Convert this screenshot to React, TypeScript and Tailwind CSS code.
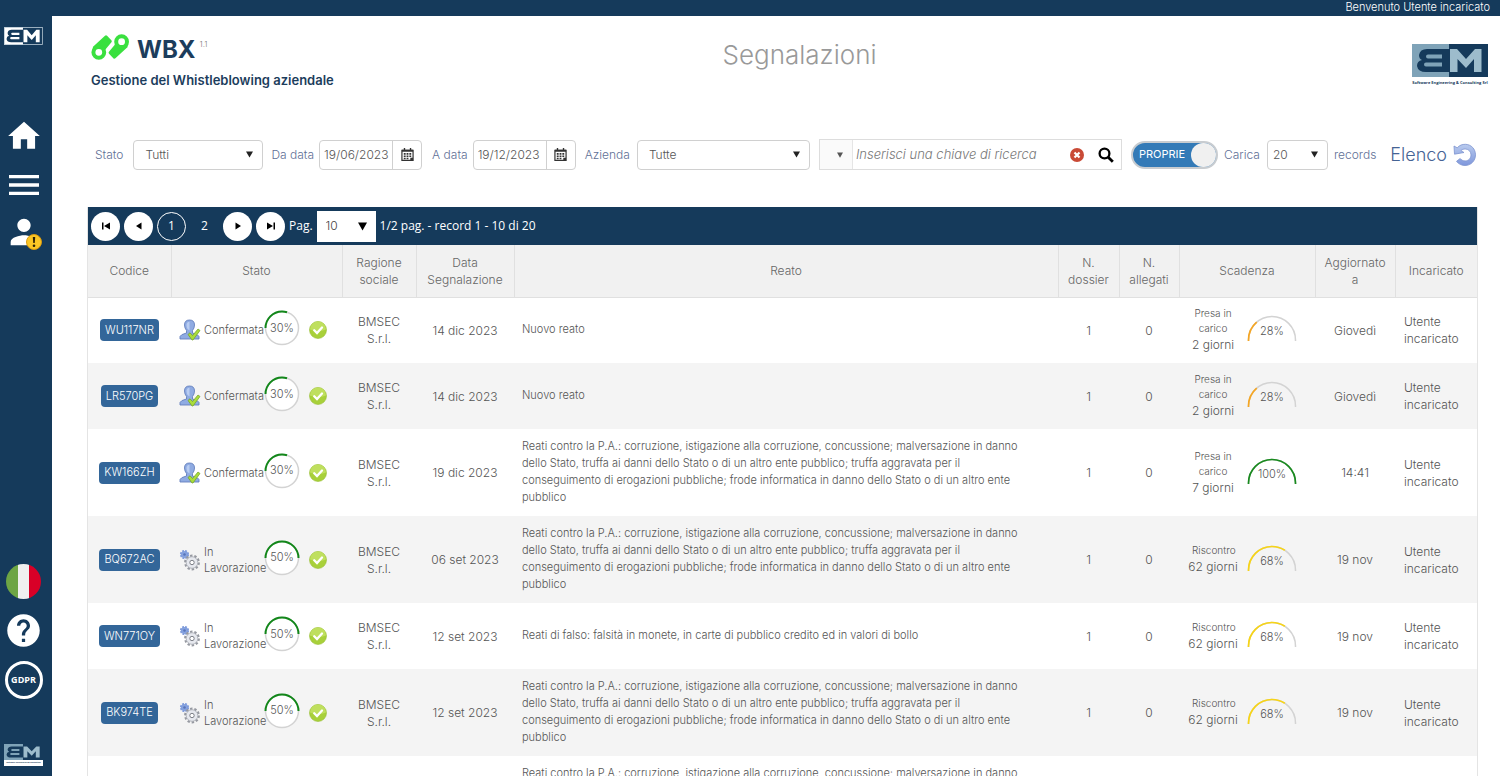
import React, { useState } from 'react';
import { MdHelp, MdHome, MdMenu, MdPerson } from 'react-icons/md';

interface Report {
  code: string;
  status: 'Confermata' | 'In Lavorazione';
  progress: number;
  date: string;
  crime: string;
  phase: string;
  days: string;
  remaining: number;
  color: string;
  updated: string;
}

const PA_CRIME =
  'Reati contro la P.A.: corruzione, istigazione alla corruzione, concussione; malversazione in danno dello Stato, truffa ai danni dello Stato o di un altro ente pubblico; truffa aggravata per il conseguimento di erogazioni pubbliche; frode informatica in danno dello Stato o di un altro ente pubblico';

const reports: Report[] = [
  { code: 'WU117NR', status: 'Confermata', progress: 30, date: '14 dic 2023', crime: 'Nuovo reato', phase: 'Presa in carico', days: '2 giorni', remaining: 28, color: '#f5a623', updated: 'Giovedì' },
  { code: 'LR570PG', status: 'Confermata', progress: 30, date: '14 dic 2023', crime: 'Nuovo reato', phase: 'Presa in carico', days: '2 giorni', remaining: 28, color: '#f5a623', updated: 'Giovedì' },
  { code: 'KW166ZH', status: 'Confermata', progress: 30, date: '19 dic 2023', crime: PA_CRIME, phase: 'Presa in carico', days: '7 giorni', remaining: 100, color: '#198a1f', updated: '14:41' },
  { code: 'BQ672AC', status: 'In Lavorazione', progress: 50, date: '06 set 2023', crime: PA_CRIME, phase: 'Riscontro', days: '62 giorni', remaining: 68, color: '#f7d417', updated: '19 nov' },
  { code: 'WN771OY', status: 'In Lavorazione', progress: 50, date: '12 set 2023', crime: 'Reati di falso: falsità in monete, in carte di pubblico credito ed in valori di bollo', phase: 'Riscontro', days: '62 giorni', remaining: 68, color: '#f7d417', updated: '19 nov' },
  { code: 'BK974TE', status: 'In Lavorazione', progress: 50, date: '12 set 2023', crime: PA_CRIME, phase: 'Riscontro', days: '62 giorni', remaining: 68, color: '#f7d417', updated: '19 nov' },
  { code: 'BT418LM', status: 'In Lavorazione', progress: 50, date: '12 set 2023', crime: PA_CRIME, phase: 'Riscontro', days: '62 giorni', remaining: 68, color: '#f7d417', updated: '19 nov' },
];

const columns = [
  { label: 'Codice', width: 'w-[83px]' },
  { label: 'Stato', width: 'w-[171px]' },
  { label: 'Ragione sociale', width: 'w-[74px]' },
  { label: 'Data Segnalazione', width: 'w-[98px]' },
  { label: 'Reato', width: '' },
  { label: 'N. dossier', width: 'w-[61px]' },
  { label: 'N. allegati', width: 'w-[60px]' },
  { label: 'Scadenza', width: 'w-[136px]' },
  { label: 'Aggiornato a', width: 'w-[80px]' },
  { label: 'Incaricato', width: 'w-[82px]' },
];

interface LogoColors {
  left: string;
  right: string;
  b: string;
  m: string;
  border?: string;
}

const BmMark: React.FC<LogoColors & { className: string }> = ({ left, right, b, m, border, className }) => (
  <svg viewBox="0 0 76 33" preserveAspectRatio="none" className={className} aria-label="BM">
    <rect width="37" height="33" fill={left} />
    <rect x="37" width="39" height="33" fill={right} />
    {border && <rect x="1" y="1" width="74" height="31" fill="none" stroke={border} strokeWidth="1.5" />}
    <path d="M37 5H15q-7 0-8 6q0 4 3 5q-5 1-5 6q1 6 9 6H37z" fill={b} />
    <path d="M30 10.500H16q-2 0-2 2t2 2H30zM30 18.500H14q-2 0-2 2t2 2H30z" fill={left} />
    <path d="M38 28V5h7l9 10 9-10h6.500v23H62V15l-8 9-8.500-9v13z" fill={m} />
  </svg>
);

const WbxMark = () => (
  <svg viewBox="0 0 39 28" className="h-7 w-[39px]" aria-hidden="true">
    <g fill="#3ae03f" stroke="#3ae03f" strokeWidth="3" strokeLinejoin="round">
      <path d="M3.300 13.500L15 2.800L19.300 7.200L12 16z" />
      <path d="M35.100 12.500L23.400 23.200L19.100 18.800L26.400 10z" />
    </g>
    <g fill="#fff" stroke="#3ae03f" strokeWidth="4">
      <circle cx="7.800" cy="18.300" r="5.400" />
      <circle cx="30.600" cy="7.700" r="5.400" />
    </g>
  </svg>
);

const WarningBadge = () => (
  <svg viewBox="0 0 16 16" className="size-4" aria-hidden="true">
    <circle cx="8" cy="8" r="7.500" fill="#fbc625" stroke="#d99a10" />
    <path d="M6.800 3h2.400l-.5 6H7.300z" fill="#2b2005" />
    <circle cx="8" cy="11.700" r="1.300" fill="#2b2005" />
  </svg>
);

const CalendarIcon = () => (
  <svg viewBox="0 0 14 14" className="size-[13px]" aria-hidden="true">
    <path d="M1 2.500h12v10.800H1z" fill="#fff" stroke="#333" strokeWidth="1.300" />
    <path d="M1 2h12v2H1zM3 0h1.500v2H3zM9.500 0H11v2H9.500z" fill="#333" />
    <path d="M3 5.500h2v1.800H3zM6 5.500h2v1.800H6zM9 5.500h2v1.800H9zM3 8h2v1.800H3zM6 8h2v1.800H6zM9 8h2v1.800H9zM3 10.500h2V12H3zM6 10.500h2V12H6zM10 10.500h3v3h-3z" fill="#333" />
  </svg>
);

const ReloadIcon = () => (
  <svg viewBox="0 0 24 24" className="size-6" aria-hidden="true">
    <defs>
      <linearGradient id="reload" x1="0" y1="0" x2="0" y2="1">
        <stop offset="0" stopColor="#b9cbee" />
        <stop offset="1" stopColor="#7f97dc" />
      </linearGradient>
    </defs>
    <path
      d="M1 3l3.200 1.800C6.500 2.300 9.200 1.200 12.500 1.300c5.800.2 10 4.800 10 10.500 0 6-4.500 10.700-10.500 10.700-3.500 0-6.500-1.500-8.500-4.200l3.700-2.800c1.300 1.600 2.900 2.400 4.900 2.400 3.400 0 5.900-2.600 5.900-6 0-3.300-2.400-5.900-5.800-5.900-1.800 0-3.100.6-4.300 1.700L11 9.500l-9.500 1.700z"
      fill="url(#reload)"
      stroke="#7c93cf"
      strokeWidth=".8"
      strokeLinejoin="round"
    />
  </svg>
);

const UserCheckIcon = () => (
  <svg viewBox="0 0 22 22" className="h-[22px] w-[22px] shrink-0" aria-hidden="true">
    <path d="M1 20v-2.500q.5-2 6.500-3.500v-2.500Q5.500 9 5.500 6q0-5 5-5t5 5q0 3-2 5.500V14q6 1.500 6.500 3.500V20z" fill="#8fabe2" stroke="#6480bd" strokeWidth=".9" />
    <path d="M7.500 6q0-3 3-3.200v8.700q-3-1.500-3-5.500z" fill="#b9cdf2" />
    <path d="M9 15.500l2-1.700 2.500 2.700L19 10l2 1.500-7 9.500h-1z" fill="#a9dc3c" stroke="#6f9f22" strokeWidth=".7" />
  </svg>
);

const GearsIcon = () => (
  <svg viewBox="0 0 22 22" className="h-[22px] w-[22px] shrink-0" aria-hidden="true">
    <circle cx="5.500" cy="5.500" r="3.600" fill="#86a3e0" stroke="#7f9bdb" strokeWidth="2" strokeDasharray="1.800 1.050" />
    <circle cx="5.500" cy="5.500" r="1.300" fill="#5874b8" />
    <circle cx="13" cy="13.500" r="6.800" fill="none" stroke="#9699a1" strokeWidth="2.200" strokeDasharray="2.400 1.870" />
    <circle cx="13" cy="13.500" r="5.800" fill="#e6e8ee" stroke="#a5a8b0" strokeWidth=".8" />
    <circle cx="13" cy="13.500" r="2.200" fill="#fff" stroke="#7d8088" />
  </svg>
);

const CheckIcon = () => (
  <svg viewBox="0 0 18 18" className="size-[18px] shrink-0" aria-hidden="true">
    <circle cx="9" cy="9" r="8.500" fill="#a8d03a" stroke="#97bd33" strokeWidth=".6" />
    <path d="M1 8.500a8 8 0 0 1 16 0q-8 3-16 0z" fill="#bfdf5e" />
    <path d="M5.200 9.200l2.800 2.800 5-5.500" fill="none" stroke="#fff" strokeWidth="2.300" strokeLinecap="round" />
  </svg>
);

const Ring: React.FC<{ value: number }> = ({ value }) => (
  <div className="relative mb-1 size-9 shrink-0">
    <svg viewBox="0 0 36 36" className="size-9" aria-hidden="true">
      <circle cx="18" cy="18" r="16.500" fill="#fff" stroke="#d3d3d3" strokeWidth="1.500" />
      <path d="M1.500 18a16.500 16.500 0 0 1 33 0a16.500 16.500 0 0 1-33 0" pathLength="100" fill="none" stroke="#12871a" strokeWidth="2" strokeDasharray={`${value} 100`} />
    </svg>
    <span className="absolute inset-0 flex items-center justify-center text-[11px]">{value}%</span>
  </div>
);

const Gauge: React.FC<{ value: number; color: string }> = ({ value, color }) => (
  <div className="relative mb-1 h-[26px] w-[50px] shrink-0">
    <svg viewBox="0 0 50 26" className="h-[26px] w-[50px]" aria-hidden="true">
      <path d="M1.500 26v-1a23.500 23.500 0 0 1 47 0v1" fill="none" stroke="#d3d3d3" strokeWidth="1.500" />
      <path d="M1.500 26v-1a23.500 23.500 0 0 1 47 0v1" pathLength="100" fill="none" stroke={color} strokeWidth="1.700" strokeDasharray={`${value} 100`} />
    </svg>
    <span className="absolute inset-x-0 top-2 text-center text-[11px] leading-4">{value}%</span>
  </div>
);

const Arrow: React.FC<{ className: string }> = ({ className }) => (
  <svg viewBox="0 0 8 8" className={className} aria-hidden="true">
    <path d="M0 .5h8L4 7.500z" fill="currentColor" />
  </svg>
);

const Select: React.FC<{ id: string; options: string[]; width: string; pad: string }> = ({ id, options, width, pad }) => (
  <div className={`relative shrink-0 ${width}`}>
    <select id={id} className={`h-[30px] w-full appearance-none rounded border border-[#d0d0d0] bg-white text-[12px] font-light text-[#555] ${pad}`}>
      {options.map(option => (
        <option key={option}>{option}</option>
      ))}
    </select>
    <Arrow className="pointer-events-none absolute top-[11px] right-[10px] size-[7px] text-[#222]" />
  </div>
);

const DateField: React.FC<{ id: string; value: string }> = ({ id, value }) => (
  <div className="flex h-[30px] w-[103px] shrink-0 overflow-hidden rounded border border-[#d0d0d0]">
    <input id={id} type="text" defaultValue={value} className="w-[73px] border-r border-[#d0d0d0] pl-1 text-[12px] font-light text-[#555]" />
    <button type="button" aria-label="Apri calendario" className="flex flex-1 items-center justify-center">
      <CalendarIcon />
    </button>
  </div>
);

const pagerButton = 'flex size-[29px] items-center justify-center rounded-full bg-white text-black';

const PagerIcon: React.FC<{ d: string }> = ({ d }) => (
  <svg viewBox="0 0 8 8" className="size-2" aria-hidden="true">
    <path d={d} fill="currentColor" />
  </svg>
);

const Sidebar = () => (
  <aside className="flex h-screen w-[52px] shrink-0 flex-col items-center justify-between bg-[#153a5b] pt-[27px] pr-[5px] pb-[10px] text-white">
    <nav className="flex flex-col items-center">
      <BmMark left="#fff" right="#153a5b" b="#153a5b" m="#fff" border="#b8c8d4" className="h-[18px] w-[39px]" />
      <a href="#home" aria-label="Home" className="mt-[72px]"><MdHome size={38} /></a>
      <a href="#menu" aria-label="Menu" className="mt-[10px]"><MdMenu size={40} /></a>
      <a href="#profilo" aria-label="Profilo" className="relative mt-[7px]">
        <MdPerson size={40} />
        <span className="absolute right-[2px] bottom-[2px]"><WarningBadge /></span>
      </a>
    </nav>
    <div className="flex flex-col items-center">
      <button type="button" aria-label="Italiano" className="flex size-[35px] overflow-hidden rounded-full">
        <span className="h-full flex-1 bg-[#6da544]" />
        <span className="h-full flex-1 bg-[#f0f0f0]" />
        <span className="h-full flex-1 bg-[#d80027]" />
      </button>
      <a href="#aiuto" aria-label="Aiuto" className="mt-3"><MdHelp size={39} /></a>
      <a href="#gdpr" className="mt-[11px] flex size-[38px] items-center justify-center rounded-full border-[3px] border-white font-['Open_Sans',sans-serif] text-[9px] font-bold">GDPR</a>
      <div className="mt-[45px] w-[39px] bg-white">
        <BmMark left="#7fa3b8" right="#153a5b" b="#153a5b" m="#9dbccc" className="h-4 w-[39px]" />
        <div className="h-[6px]">
          <p className="overflow-hidden text-center font-['Open_Sans',sans-serif] text-[2px] leading-[5px] font-bold whitespace-nowrap text-[#153a5b]">Software Engineering &amp; Consulting</p>
        </div>
      </div>
    </div>
  </aside>
);

const Header = () => (
  <header className="grid grid-cols-[260px_1fr_240px] pt-[18px] pr-3 pl-[39px]">
    <div>
      <div className="flex items-start">
        <WbxMark />
        <span className="ml-[7px] text-[24px] leading-8 font-bold text-[#1c3d5c]">WBX</span>
        <span className="ml-1 pt-1 text-[8px] font-light text-[#777]">1.1</span>
      </div>
      <p className="mt-1 text-[13px] leading-5 font-semibold text-[#1c3d5c]">Gestione del Whistleblowing aziendale</p>
    </div>
    <h1 className="text-center text-[26px] leading-[42px] font-light text-[#999]">Segnalazioni</h1>
    <div className="mt-[10px] flex w-[76px] flex-col items-center justify-self-end">
      <BmMark left="#7fa3b8" right="#153a5b" b="#153a5b" m="#9dbccc" className="h-[33px] w-[76px]" />
      <p className="font-['Open_Sans',sans-serif] text-[4px] leading-[11px] font-bold whitespace-nowrap text-[#153a5b]">Software Engineering &amp; Consulting Srl</p>
    </div>
  </header>
);

const Filters = () => {
  const [own, setOwn] = useState(true);

  return (
    <form className="mt-[49px] flex h-[31px] items-center pr-[23px] pl-[43px] text-[12px] font-light text-[#5f7096]">
      <label htmlFor="stato" className="mr-[10px]">Stato</label>
      <Select id="stato" options={['Tutti', 'Confermata', 'In Lavorazione']} width="w-[130px]" pad="pl-[11px]" />
      <label htmlFor="da" className="mr-[5px] ml-2">Da data</label>
      <DateField id="da" value="19/06/2023" />
      <label htmlFor="a" className="mr-[5px] ml-[10px]">A data</label>
      <DateField id="a" value="19/12/2023" />
      <label htmlFor="azienda" className="mr-[7px] ml-[9px]">Azienda</label>
      <Select id="azienda" options={['Tutte', 'BMSEC S.r.l.']} width="w-[173px]" pad="pl-[11px]" />

      {/* Search box */}
      <div className="mx-[9px] flex h-[31px] min-w-0 flex-1 items-center border border-[#ddd]">
        <button type="button" aria-label="Opzioni di ricerca" className="flex h-full w-[33px] items-center justify-end border-r border-[#e5e5e5] bg-[#fafafa] pr-[9px] text-[#555]">
          <Arrow className="size-[6px]" />
        </button>
        <input type="text" aria-label="Ricerca" placeholder="Inserisci una chiave di ricerca" className="min-w-0 flex-1 pl-[3px] text-[13px] font-light italic placeholder:text-[#777]" />
        <button type="button" aria-label="Cancella ricerca" className="mr-[14px]">
          <svg viewBox="0 0 14 14" className="size-[14px]" aria-hidden="true">
            <circle cx="7" cy="7" r="7" fill="#c94a36" />
            <path d="M4.500 4.500l5 5M9.500 4.500l-5 5" stroke="#fff" strokeWidth="2.200" />
          </svg>
        </button>
        <button type="button" aria-label="Cerca" className="mr-[7px] text-black">
          <svg viewBox="0 0 16 16" className="size-4" fill="none" stroke="currentColor" aria-hidden="true">
            <circle cx="6.500" cy="6.500" r="4.900" strokeWidth="2.300" />
            <path d="M10 10l4.800 4.800" strokeWidth="2.800" />
          </svg>
        </button>
      </div>

      <label className="relative flex h-7 w-[87px] shrink-0 cursor-pointer items-center rounded-full border-2 border-[#c8ccd0] bg-[#337ab7] pl-[6px] text-[11px] font-normal text-white">
        <input type="checkbox" checked={own} onChange={e => setOwn(e.target.checked)} className="sr-only" />
        PROPRIE
        <span className="absolute inset-y-0 right-0 w-[25px] rounded-full bg-[#f0f0f0]" />
      </label>
      <label htmlFor="carica" className="mr-[7px] ml-[6px]">Carica</label>
      <Select id="carica" options={['20', '50', '100']} width="w-[61px]" pad="pl-[5px]" />
      <span className="mr-[14px] ml-[6px]">records</span>
      <a href="#elenco" className="flex items-center gap-[6px] text-[18px] text-[#456394]">
        Elenco
        <ReloadIcon />
      </a>
    </form>
  );
};

const Pager = () => (
  <div className="flex h-[38px] items-center gap-1 bg-[#153a5b] pl-[3px] font-['Open_Sans',sans-serif] text-[12px] text-white">
    <button type="button" aria-label="Prima pagina" className={pagerButton}><PagerIcon d="M0 .5h1.500v7H0zM8 .5v7L2 4z" /></button>
    <button type="button" aria-label="Pagina precedente" className={pagerButton}><PagerIcon d="M6.500.5v7L1 4z" /></button>
    <button type="button" className="size-[29px] rounded-full border border-white">1</button>
    <button type="button" className="size-[29px] rounded-full">2</button>
    <button type="button" aria-label="Pagina successiva" className={pagerButton}><PagerIcon d="M1.500.5v7L7 4z" /></button>
    <button type="button" aria-label="Ultima pagina" className={pagerButton}><PagerIcon d="M6.500.5H8v7H6.500zM0 .5v7L6 4z" /></button>
    <label htmlFor="pag">Pag.</label>
    <div className="relative w-[59px] text-black">
      <select id="pag" className="h-[31px] w-full appearance-none bg-white pl-[9px] font-[Inter,sans-serif] text-[12px] font-light text-[#444]">
        <option>10</option>
        <option>20</option>
      </select>
      <Arrow className="pointer-events-none absolute top-[11px] right-[9px] size-[9px]" />
    </div>
    <span>1/2 pag. - record 1 - 10 di 20</span>
  </div>
);

const ReportRow: React.FC<{ report: Report }> = ({ report }) => (
  <tr className="h-[66px] even:bg-[#f4f4f4]">
    <td className="text-center">
      <button type="button" className="h-[22px] rounded bg-[#336699] px-[5px] text-[11px] text-white">{report.code}</button>
    </td>
    <td className="pl-2">
      <div className="flex items-center">
        {report.status === 'Confermata' ? <UserCheckIcon /> : <GearsIcon />}
        <span className="ml-[3px] w-[60px] text-[11px] leading-4">{report.status}</span>
        <Ring value={report.progress} />
        <span className="ml-[9px]"><CheckIcon /></span>
      </div>
    </td>
    <td className="px-4 text-center">BMSEC S.r.l.</td>
    <td className="text-center">{report.date}</td>
    <td className="pt-[9px] pr-6 pb-[10px] pl-2 text-[11px] leading-[17px]">{report.crime}</td>
    <td className="text-center">1</td>
    <td className="text-center">0</td>
    <td>
      <div className="flex items-center pl-[9px]">
        <div className="w-[50px] text-center">
          <div className="px-1 text-[10px] leading-[15px]">{report.phase}</div>
          <div className="leading-[18px] whitespace-nowrap">{report.days}</div>
        </div>
        <span className="ml-[9px]"><Gauge value={report.remaining} color={report.color} /></span>
      </div>
    </td>
    <td className="text-center">{report.updated}</td>
    <td className="pl-[9px]">Utente incaricato</td>
  </tr>
);

const App: React.FC = () => (
  <div className="flex h-screen overflow-hidden bg-white font-[Inter,sans-serif]">
    <Sidebar />
    <div className="min-w-0 flex-1">
      <div className="h-4 bg-[#153a5b] pr-[10px] text-right text-[11px] leading-[15px] font-light text-white">Benvenuto Utente incaricato</div>
      <Header />
      <Filters />
      <main className="mt-[37px] mr-[22px] ml-[35px] border-x border-[#e4e4e4]">
        <Pager />
        <table className="w-full table-fixed border-collapse text-[12px] leading-[17px] font-light text-[#555]">
          <thead>
            <tr className="h-[52px] border-b border-[#e0e0e0] bg-[#f1f1f1] text-[#666]">
              {columns.map(column => (
                <th key={column.label} className={`border-r border-[#e0e0e0] px-2 text-center font-light last:border-r-0 ${column.width}`}>
                  {column.label}
                </th>
              ))}
            </tr>
          </thead>
          <tbody>
            {reports.map(report => (
              <ReportRow key={report.code} report={report} />
            ))}
          </tbody>
        </table>
      </main>
    </div>
  </div>
);

export default App;
